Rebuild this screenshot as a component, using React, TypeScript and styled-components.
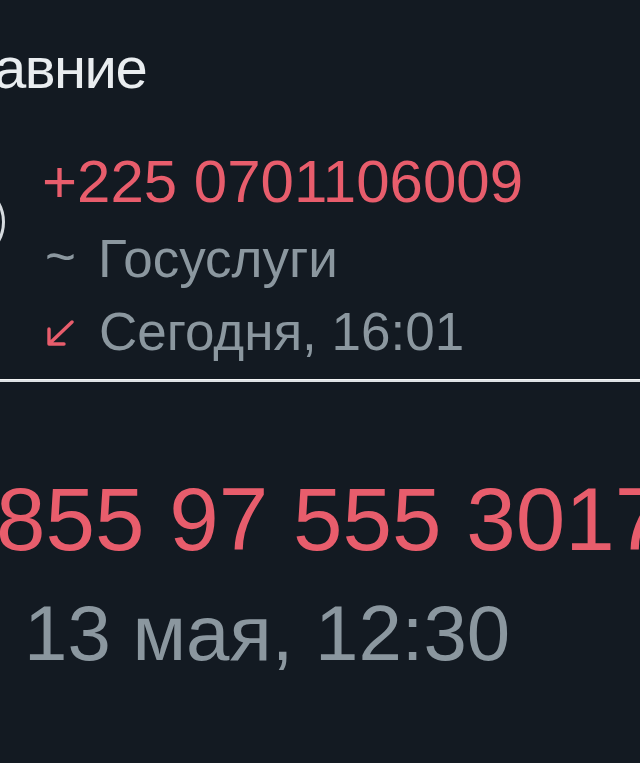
import React from 'react';
import styled, { createGlobalStyle } from 'styled-components';

const GlobalStyle = createGlobalStyle`
  html, body {
    margin: 0;
    padding: 0;
    background-color: #131a22;
  }
`;

const Page = styled.div`
  width: 640px;
  min-height: 763px;
  overflow: hidden;
  background-color: #131a22;
  font-family: "Liberation Sans", Arial, sans-serif;
  padding-top: 39px;
  box-sizing: border-box;
`;

const Title = styled.h1`
  margin: 0 0 0 -6px;
  font-size: 58px;
  line-height: 1;
  font-weight: 400;
  letter-spacing: -1.5px;
  color: #e9edf0;
  white-space: nowrap;
`;

const CallRow = styled.div`
  display: flex;
  align-items: flex-start;
  margin-top: 55px;
`;

const Avatar = styled.div`
  flex-shrink: 0;
  width: 80px;
  height: 80px;
  margin: 30px 0 0 -75px;
  border-radius: 50%;
  border: 3px solid #d6dbdf;
  box-sizing: border-box;
`;

const Info = styled.div`
  display: flex;
  flex-direction: column;
  row-gap: 20px;
  margin-left: 37px;
`;

const Number = styled.div<{ $size: number }>`
  font-size: ${(p) => p.$size}px;
  line-height: 1;
  color: #e85d6c;
  white-space: nowrap;
`;

const MetaLine = styled.div`
  display: flex;
  align-items: center;
  font-size: 53px;
  line-height: 1;
  color: #8b979f;
  white-space: nowrap;
`;

const Tilde = styled.span`
  width: 53px;
  flex-shrink: 0;
  margin-left: 3px;
  margin-top: -4px;
`;

const ArrowBox = styled.span`
  display: flex;
  width: 53px;
  flex-shrink: 0;
  margin-left: 4px;
  margin-top: 2px;
`;

const Divider = styled.div`
  height: 3px;
  margin-top: 21px;
  background-color: #dde1e4;
  border-top: 1px solid #f2f4f5;
  box-sizing: border-box;
`;

const Zoomed = styled.div`
  display: flex;
  flex-direction: column;
  row-gap: 30px;
  margin-top: 93px;
`;

const BigNumber = styled(Number)`
  margin-left: -4px;
`;

const BigDate = styled.div`
  margin-left: 24px;
  font-size: 78px;
  line-height: 1;
  color: #8b979f;
  white-space: nowrap;
`;

const IncomingArrow: React.FC = () => (
  <svg width="28" height="26" viewBox="0 0 28 26" fill="none">
    <path
      d="M26 2 L4 23 M3 9 L3 24 L18 24"
      stroke="#e85d6c"
      strokeWidth="3.4"
      strokeLinecap="round"
      strokeLinejoin="round"
    />
  </svg>
);

const App: React.FC = () => {
  return (
    <>
      <GlobalStyle />
      <Page>
        <Title>авние</Title>
        <CallRow>
          <Avatar />
          <Info>
            <Number $size={60}>+225 0701106009</Number>
            <MetaLine>
              <Tilde>~</Tilde>
              Госуслуги
            </MetaLine>
            <MetaLine>
              <ArrowBox>
                <IncomingArrow />
              </ArrowBox>
              Сегодня, 16:01
            </MetaLine>
          </Info>
        </CallRow>
        <Divider />
        <Zoomed>
          <BigNumber $size={89}>855 97 555 3017</BigNumber>
          <BigDate>13 мая, 12:30</BigDate>
        </Zoomed>
      </Page>
    </>
  );
};

export default App;
